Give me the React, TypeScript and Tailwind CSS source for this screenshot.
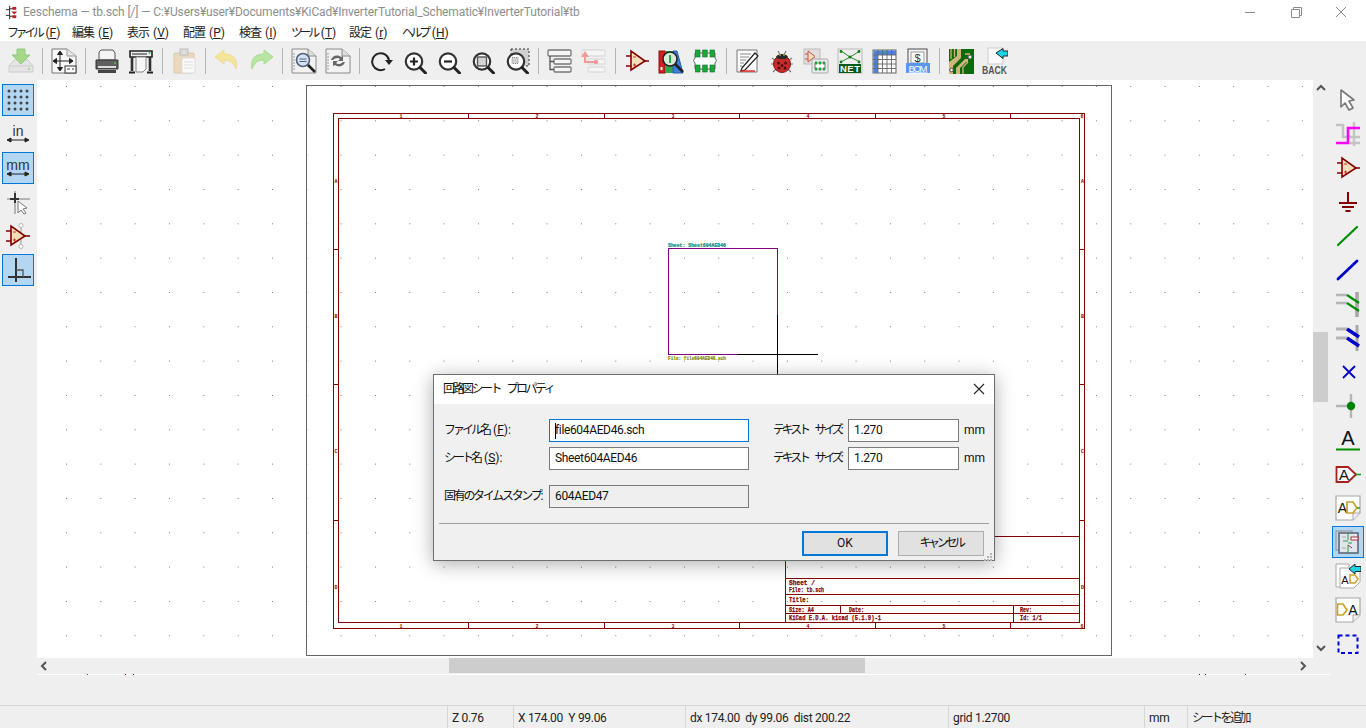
import type { ReactNode } from "react";

const FONT = "font-['Roboto','Noto_Sans_CJK_JP',sans-serif]";
const MAROON = "#840000";

function Ico({ children }: { children: ReactNode }) {
  return (
    <svg width="26" height="26" viewBox="0 0 26 26" fill="none" className="shrink-0">
      {children}
    </svg>
  );
}

function Lens({ children, color = "#333" }: { children?: ReactNode; color?: string }) {
  return (
    <g transform="translate(1 2.5)">
      <circle cx="11" cy="11" r="8.2" stroke={color} strokeWidth="2.2" fill="#fff" />
      {children}
      <path d="M17 17l5.5 5.5" stroke="#222" strokeWidth="3" strokeLinecap="round" />
    </g>
  );
}

function DocGlass({ children }: { children: ReactNode }) {
  return (
    <>
      <path d="M1 1H17L25 8V25H1Z" fill="#f2f2f2" stroke="#8a8a8a" />
      <path d="M17 1V8H25" fill="#ddd" stroke="#8a8a8a" />
      <path d="M3 5v18" stroke="#999" strokeDasharray="2 1" />
      {children}
    </>
  );
}

function Sym() {
  return (
    <>
      <path d="M7 3V22L21 13Z" fill="#f6dfb8" stroke={MAROON} strokeWidth="1.6" />
      <path d="M2 8H7M2 18H7M21 13H25" stroke={MAROON} strokeWidth="1.6" />
      <path d="M9 9h3M9 17h3M10.5 15.5v3" stroke="#c03030" />
    </>
  );
}

function HierDoc({ children }: { children: ReactNode }) {
  return (
    <>
      <path d="M1 1H25V18L18 25H1Z" fill="#fff" stroke="#a8a8a8" strokeWidth="1.2" />
      <path d="M25 18H18V25" fill="#eee" stroke="#a8a8a8" />
      {children}
    </>
  );
}

const top: ReactNode[] = [
  <Ico><path d="M1 18L6 12H20L25 18V24H1Z" fill="#e4e4e4" stroke="#cdcdcd" /><path d="M1 18H25" stroke="#cdcdcd" /><circle cx="21" cy="21" r="1" fill="#8fd48f" /><path d="M9 1H17V7H22L13 16 4 7H9Z" fill="#a7d88a" stroke="#93c978" /></Ico>,
  "sep",
  <Ico><path d="M1 1H16L25 8V25H1Z" fill="#f7f7f7" stroke="#777" /><path d="M16 1V8H25" fill="#e5e5e5" stroke="#999" /><path d="M9 4V22M3 13H21M9 3l-2.5 3.5h5zM9 23l-2.5-3.5h5zM2 13l3.5-2.5v5zM22 13l-3.5-2.5v5z" stroke="#222" fill="#222" strokeWidth="1" /><rect x="14" y="18" width="11" height="7" fill="#fff" stroke="#333" /><path d="M16 21h3M21 21h2" stroke="#333" /></Ico>,
  "sep",
  <Ico><path d="M7 2H19L21 5V12H5V4Z" fill="#f4f4f4" stroke="#555" /><path d="M2 12H24V21H2Z" fill="#5f5f5f" stroke="#333" /><path d="M4 19h18" stroke="#ddd" strokeWidth="2" /><path d="M4 22H22V25H4Z" fill="#444" /><circle cx="21" cy="15" r="1" fill="#36c936" /></Ico>,
  <Ico><path d="M2 3H24V9H2Z" fill="#eee" stroke="#222" strokeWidth="1.6" /><path d="M4 6H19" stroke="#222" /><circle cx="21.5" cy="5" r="1" fill="#36c936" /><path d="M8 9H18V21L15 24H8Z" fill="#f7f7f7" stroke="#888" /><path d="M4 9V23M22 9V23" stroke="#333" strokeWidth="2.6" /><path d="M1 24.5H7M19 24.5H25" stroke="#222" strokeWidth="2" /></Ico>,
  "sep",
  <Ico><rect x="3" y="5" width="20" height="20" rx="1" fill="#ead9bd" stroke="#d8c7aa" /><rect x="9" y="1" width="8" height="6" fill="#ddd" stroke="#bbb" /><path d="M11 10H24V25H11Z" fill="#fafafa" stroke="#ddd" /><path d="M13 14h9M13 17h9M13 20h9" stroke="#ddd" /></Ico>,
  "sep",
  <Ico><path d="M1 9L10 2V6C19 6 24 11 22 21 20 15 16 12 10 12V16Z" fill="#f4e59a" stroke="#ecdc8a" /></Ico>,
  <Ico><path d="M25 9L16 2V6C7 6 2 11 4 21 6 15 10 12 16 12V16Z" fill="#b8e6a0" stroke="#aadc92" /></Ico>,
  "sep",
  <Ico><DocGlass><circle cx="12" cy="12" r="6.5" fill="#d5e2f3" stroke="#50627a" strokeWidth="1.6" /><path d="M8.5 11h7M8.5 13.5h7" stroke="#50627a" /><path d="M17 17l7 7" stroke="#222" strokeWidth="2.6" /></DocGlass></Ico>,
  <Ico><DocGlass><path d="M6 12C7 8 12 6 16 9l2-1v5h-5l2-2c-2-2-5-1-7 1zM20 14c-1 4-6 6-10 3l-2 1v-5h5l-2 2c2 2 5 1 7-1z" fill="#666" /></DocGlass></Ico>,
  "sep",
  <Ico><path d="M17 21A8.5 8.5 0 1 1 21 12" stroke="#222" strokeWidth="2" /><path d="M17 12H25L21 17Z" fill="#222" /></Ico>,
  <Ico><Lens><path d="M7 11H15M11 7V15" stroke="#222" strokeWidth="2.2" /></Lens></Ico>,
  <Ico><Lens><path d="M7 11H15" stroke="#222" strokeWidth="2.2" /></Lens></Ico>,
  <Ico><Lens><rect x="6.5" y="6.5" width="9" height="9" fill="#d4d4d4" stroke="#555" strokeWidth="1.4" /></Lens></Ico>,
  <Ico><rect x="7" y="1" width="18" height="17" fill="#d0d0d0" stroke="#333" strokeDasharray="2 2" /><Lens /><rect x="8" y="9.5" width="6" height="6" fill="#d0d0d0" stroke="#888" strokeDasharray="1 1" /></Ico>,
  "sep",
  <Ico><rect x="1" y="2" width="23" height="6" rx="1" fill="#f5f5f5" stroke="#777" strokeWidth="1.3" /><rect x="7" y="11" width="17" height="5" rx="1" fill="#f5f5f5" stroke="#777" strokeWidth="1.3" /><rect x="7" y="19" width="17" height="5" rx="1" fill="#f5f5f5" stroke="#777" strokeWidth="1.3" /><path d="M3 8V21.5H7M3 13.5H7" stroke="#555" strokeWidth="1.3" /></Ico>,
  <Ico><rect x="1" y="2" width="23" height="6" rx="1" fill="#f5f5f5" stroke="#ddd" strokeWidth="1.3" /><rect x="7" y="11" width="17" height="5" rx="1" fill="#f5f5f5" stroke="#ddd" strokeWidth="1.3" /><rect x="7" y="19" width="17" height="5" rx="1" fill="#f5f5f5" stroke="#ddd" strokeWidth="1.3" /><path d="M4 8V14H14" stroke="#ee9a9a" strokeWidth="2" /><path d="M0 9L4 3 8 9Z" fill="#ee9a9a" /><circle cx="15" cy="14" r="2.2" fill="#ee9a9a" /></Ico>,
  "sep",
  <Ico><Sym /></Ico>,
  <Ico><rect x="1" y="3" width="6" height="22" fill="#d02020" stroke="#901010" /><rect x="7" y="3" width="8" height="22" fill="#2aa84a" /><path d="M15 3H19L25 25H15Z" fill="#3d7fe0" stroke="#2c5fa8" /><circle cx="12" cy="11" r="7" fill="#d9ead9" stroke="#222" strokeWidth="1.6" /><path d="M12 7V15" stroke="#2aa84a" strokeWidth="2" /><path d="M17 16l8 8" stroke="#222" strokeWidth="2.6" /><rect x="2.5" y="19" width="2" height="3" fill="#fff" /></Ico>,
  <Ico><path d="M3 5H23V10L24.5 12.5 23 15V21H3V15L1.5 12.5 3 10Z" fill="#fff" stroke="#666" /><g fill="#19a83a" stroke="#0b6c20" strokeWidth=".6"><rect x="3.5" y="2" width="4.5" height="7" /><rect x="10.7" y="2" width="4.5" height="7" /><rect x="18" y="2" width="4.5" height="7" /><rect x="3.5" y="17" width="4.5" height="7" /><rect x="10.7" y="17" width="4.5" height="7" /><rect x="18" y="17" width="4.5" height="7" /></g></Ico>,
  "sep",
  <Ico><path d="M2 2H22V24H2Z" fill="#fbfbfb" stroke="#777" /><path d="M5 6H16M5 9H14M5 12H11M5 15H9M5 18H7" stroke="#888" /><path d="M7 20L20 5 23 8 10 22 6 23Z" fill="#fff" stroke="#222" strokeWidth="1.2" /><path d="M5 23H20" stroke="#e02020" strokeWidth="1.4" /></Ico>,
  <Ico><path d="M9 3l2 4M17 3l-2 4M3 10l3 2M23 10l-3 2M2 16h4M24 16h-4M4 24l3-3M22 24l-3-3" stroke="#777" strokeWidth="1.1" /><ellipse cx="13" cy="16" rx="8.5" ry="8.5" fill="#c82a2a" stroke="#7a1a1a" /><path d="M7 8.5A7 5 0 0 1 19 8.5L17 11H9Z" fill="#2a2a2a" /><path d="M10 7h2M14 7h2" stroke="#d8c040" strokeWidth="1.2" /><circle cx="9.5" cy="15" r="1.5" fill="#541010" /><circle cx="16.5" cy="15" r="1.5" fill="#541010" /><circle cx="10" cy="20" r="1.5" fill="#541010" /><circle cx="16" cy="20" r="1.5" fill="#541010" /><circle cx="13" cy="17.5" r="1.5" fill="#541010" /></Ico>,
  <Ico><rect x="1" y="1" width="16" height="15" fill="#e2dedd" stroke="#bbb" /><path d="M5 3V14L12 8.5Z" fill="#f6dfb8" stroke="#c05050" /><path d="M2 6h3M2 11h3" stroke="#c05050" /><rect x="9" y="11" width="16" height="14" rx="1" fill="#e9e9e9" stroke="#aaa" /><rect x="12" y="15" width="10" height="6" fill="#fff" stroke="#777" /><g fill="#19a83a"><rect x="12" y="13.5" width="2" height="3" /><rect x="16" y="13.5" width="2" height="3" /><rect x="20" y="13.5" width="2" height="3" /><rect x="12" y="19.5" width="2" height="3" /><rect x="16" y="19.5" width="2" height="3" /><rect x="20" y="19.5" width="2" height="3" /></g></Ico>,
  <Ico><rect x="1" y="1" width="24" height="24" fill="#eee" stroke="#bbb" /><path d="M4 3L13 9 23 3M4 14L13 9 23 14" stroke="#2a8a2a" /><g fill="#127a12"><circle cx="4" cy="3.5" r="1.4" /><circle cx="22" cy="3.5" r="1.4" /><circle cx="13" cy="9" r="1.6" /><circle cx="4" cy="14" r="1.4" /><circle cx="22" cy="14" r="1.4" /></g><rect x="2" y="16" width="22" height="9" fill="#0a5a1a" /><text x="13" y="24" textAnchor="middle" fontSize="9.5" fontWeight="700" fill="#fff" fontFamily="Liberation Sans" textLength="20">NET</text></Ico>,
  <Ico><rect x="2" y="2" width="23" height="23" fill="#fff" stroke="#666" /><path d="M2.5 2.5H25V7H7V25H2.5Z" fill="#4a82dc" /><path d="M7 2V25M11.5 2V25M16 2V25M20.5 2V25M2 7H25M2 11.5H25M2 16H25M2 20.5H25" stroke="#666" strokeWidth=".9" /></Ico>,
  <Ico><rect x="3" y="1" width="19" height="15" fill="#f5f5f5" stroke="#666" strokeWidth="1.2" /><rect x="6" y="4" width="13" height="11" fill="#fff" stroke="#999" /><text x="12.5" y="14" textAnchor="middle" fontSize="11" fill="#333" fontFamily="Liberation Sans">$</text><rect x="1" y="15" width="24" height="10" fill="#5a96ee" /><text x="13" y="23.5" textAnchor="middle" fontSize="9.5" fill="#fff" fontFamily="Liberation Sans" textDecoration="underline" textLength="19">BOM</text></Ico>,
  "sep",
  <Ico><rect x="1" y="1" width="25" height="25" fill="#0c6a0c" /><path d="M1 14L9 8V1H13V10L5 18V26H1ZM8 26V20L17 11H20V14H18L12 20V26Z" fill="#d3b27b" /><path d="M3 1V11M6.5 1V9M10 1V7M17 6H22M15 26V19L20 14" stroke="#d3b27b" strokeWidth="1.3" /><circle cx="22" cy="9" r="2" fill="#f2f2f2" stroke="#555" /><circle cx="3.5" cy="22" r="1.8" fill="#f2f2f2" stroke="#555" /></Ico>,
  <svg width="26" height="32" viewBox="0 -3 26 32" fill="none" className="shrink-0">
    <path d="M6 0H21V16H6Z" fill="#fafafa" stroke="#ccc" />
    <path d="M14 5L21 .5V3H26V8H21V10.5Z" fill="#19d6e6" stroke="#222" />
    <g transform="scale(.82 1)">
      <text x="0" y="26" fontSize="10.5" fontWeight="700" fill="#555" fontFamily="Liberation Sans">BACK</text>
    </g>
  </svg>,
];

const unitArrow = <path d="M3 19H23M2 19l4-2v4zM24 19l-4-2v4z" stroke="#222" fill="#222" strokeWidth="1" />;

const left: [ReactNode, boolean][] = [
  [<Ico><g fill="#444">{[4, 10, 16, 22].flatMap((y) => [4, 10, 16, 22].map((x) => <circle key={`${x}-${y}`} cx={x} cy={y} r="1.5" />))}</g></Ico>, true],
  [<Ico><text x="13" y="15" textAnchor="middle" fontSize="14" fill="#333" fontFamily="Liberation Sans">in</text>{unitArrow}</Ico>, false],
  [<Ico><text x="13" y="15" textAnchor="middle" fontSize="14" fill="#333" fontFamily="Liberation Sans">mm</text>{unitArrow}</Ico>, true],
  [<Ico><path d="M10 2V25M2 10H25" stroke="#b5b5b5" strokeWidth="2" /><path d="M5 10H14M10 4V14" stroke="#333" strokeWidth="2" /><path d="M13 12V24L16 21 19 25 21 24 18 20 22 19Z" fill="#fff" stroke="#777" /></Ico>, false],
  [<Ico><path d="M16 3V23" stroke="#b5b5b5" strokeWidth="1.5" /><circle cx="16" cy="2.5" r="2" stroke="#b5b5b5" fill="#fff" /><circle cx="16" cy="23.5" r="2" stroke="#b5b5b5" fill="#fff" /><path d="M6 3V22L20 13Z" fill="#f6dfb8" stroke={MAROON} strokeWidth="1.6" /><path d="M1 8H6M1 18H6M20 13H25" stroke={MAROON} strokeWidth="1.6" /><path d="M8 9h3M8 17h3M9.5 15.5v3" stroke="#c03030" /></Ico>, false],
  [<Ico><path d="M11 1V25M3 20H26" stroke="#333" strokeWidth="2" /><path d="M11 13H18V20" stroke="#555" strokeWidth="1.3" /></Ico>, true],
];

const right: [ReactNode, boolean][] = [
  [<Ico><path d="M6 3V20L10 16 14 23 18 21 14 14 19 13Z" fill="#fff" stroke="#777" strokeWidth="1.6" strokeLinejoin="round" /></Ico>, false],
  [<Ico><path d="M1 4H8V16H25M19 1V25M15 22H25" stroke="#c4c4c4" strokeWidth="2.4" /><path d="M1 22H13V7H25" stroke="#ff00ff" strokeWidth="2.6" /></Ico>, false],
  [<Ico><Sym /></Ico>, false],
  [<Ico><path d="M13 3V14" stroke={MAROON} strokeWidth="2" /><path d="M4 14H22M7 18H19M10.5 22H15.5" stroke={MAROON} strokeWidth="2" /></Ico>, false],
  [<Ico><path d="M3 22L22 4" stroke="#008f00" strokeWidth="2.2" strokeLinecap="round" /></Ico>, false],
  [<Ico><path d="M3 22L22 4" stroke="#0000c8" strokeWidth="2.8" strokeLinecap="round" /></Ico>, false],
  [<Ico><path d="M1 4H12M1 12H12" stroke="#b5b5b5" strokeWidth="2.4" /><path d="M22 1V26" stroke="#a8a8a8" strokeWidth="3.6" /><path d="M12 4L24 12M12 12L24 20" stroke="#008f00" strokeWidth="2.2" /></Ico>, false],
  [<Ico><path d="M1 4H12M1 13H12" stroke="#b5b5b5" strokeWidth="3" /><path d="M22 0V26" stroke="#a8a8a8" strokeWidth="3" /><path d="M12 4L24 12M12 13L24 21" stroke="#0000c8" strokeWidth="3.4" /></Ico>, false],
  [<Ico><path d="M8 7L20 19M20 7L8 19" stroke="#0000c8" strokeWidth="1.8" /></Ico>, false],
  [<Ico><path d="M1 13H16M16 1V25" stroke="#b5b5b5" strokeWidth="2.4" /><circle cx="16" cy="13" r="4.2" fill="#008400" /></Ico>, false],
  [<Ico><text x="13" y="18.4" textAnchor="middle" fontSize="20" fill="#111" fontFamily="Liberation Sans">A</text><path d="M1 22.5H25" stroke="#008f00" strokeWidth="2" /></Ico>, false],
  [<Ico><path d="M1.5 6H13L21 13.5 13 21H1.5Z" fill="#fff" stroke="#a62020" strokeWidth="1.8" /><path d="M21 13.5H26" stroke="#12a012" strokeWidth="1.6" /><text x="9" y="19" textAnchor="middle" fontSize="15" fill="#111" fontFamily="Liberation Sans">A</text></Ico>, false],
  [<Ico><HierDoc><text x="7.5" y="18" textAnchor="middle" fontSize="14" fill="#111" fontFamily="Liberation Sans">A</text><path d="M12 7H18L22 13 18 18H12Z" fill="#fff" stroke="#c9a227" strokeWidth="1.7" /><path d="M22 13H25" stroke="#12a012" strokeWidth="1.4" /></HierDoc></Ico>, false],
  [<Ico><rect x="1" y="2" width="16" height="19" fill="#cfd6df" stroke="#8a9099" /><rect x="4" y="4" width="19" height="20" fill="#dfe6ee" stroke="#5d6a78" strokeWidth="1.6" /><path d="M13 4V11M13 16V24M8 12H13M13 14H17" stroke="#2f9a3a" /><rect x="16" y="8" width="7" height="3" fill="#fff" stroke="#b03030" /><path d="M13 16L17 19" stroke="#b03030" /><path d="M7 8h4M7 19h4" stroke="#aaa" /></Ico>, true],
  [<Ico><path d="M1 1H14V24H1Z" fill="#fff" stroke="#aaa" /><path d="M5 5H25V19L19 25H5Z" fill="#fff" stroke="#aaa" /><text x="10" y="21" textAnchor="middle" fontSize="11" fill="#111" fontFamily="Liberation Sans">A</text><path d="M15 12H20L23 16 20 20H15Z" fill="#fff" stroke="#c9a227" strokeWidth="1.5" /><path d="M14 6L20 1V3.5H26V8.5H20V11Z" fill="#19d6e6" stroke="#222" /></Ico>, false],
  [<Ico><HierDoc><path d="M2.5 7H8L12 13 8 18H2.5Z" fill="#fff" stroke="#c9a227" strokeWidth="1.7" /><text x="18" y="18" textAnchor="middle" fontSize="14" fill="#111" fontFamily="Liberation Sans">A</text></HierDoc></Ico>, false],
  [<Ico><rect x="3.5" y="4.5" width="19" height="17.5" stroke="#0000e0" strokeWidth="2" strokeDasharray="4 3" /></Ico>, false],
];

function ToolBtn({ on, children }: { on: boolean; children: ReactNode }) {
  return (
    <div className={`flex h-[32px] w-[32px] items-center justify-center ${on ? "border border-[#0078d7] bg-[#b3d7f3]" : ""}`}>
      {children}
    </div>
  );
}

function Menu({ label, k, w, kana }: { label: string; k: string; w: string; kana?: boolean }) {
  return (
    <span className={`whitespace-nowrap ${w}`}>
      <span className={kana ? "tracking-[-3.4px]" : "tracking-[-1px]"}>{label}</span>
      <span className="ml-[4px]">(<span className="underline">{k}</span>)</span>
    </span>
  );
}

function Field({ value, focus, dim }: { value: string; focus?: boolean; dim?: boolean }) {
  return (
    <div className={`relative flex h-[23px] items-center border pb-[2px] pl-[5px] text-[12px] tracking-[-0.35px] text-[#111] ${focus ? "border-[#0078d7]" : "border-[#7a7a7a]"} ${dim ? "bg-[#efefef]" : "bg-white"}`}>
      {value}
      {focus && <span className="absolute left-[5px] top-[3px] h-[16px] w-px bg-black" />}
    </div>
  );
}

function Schematic() {
  const nums = [[401, "1"], [537, "2"], [673, "3"], [808, "4"], [944, "5"], [1082, "6"]] as const;
  const lets = [[181, "A"], [316, "B"], [451, "C"], [587, "D"]] as const;
  const tx = (x: number, y: number, w: number, s: string) => (
    <text x={x} y={y} textLength={w} lengthAdjust="spacingAndGlyphs">{s}</text>
  );
  return (
    <svg width="1276" height="578" viewBox="37 80 1276 578" className="block" fill="none" shapeRendering="crispEdges">
      <defs>
        <pattern id="dots" x="66" y="86" width="34.33" height="34.33" patternUnits="userSpaceOnUse">
          <rect width="1.4" height="1.4" fill="#777" />
        </pattern>
      </defs>
      <rect x="37" y="80" width="1276" height="578" fill="#fff" />
      <rect x="37" y="80" width="1276" height="578" fill="url(#dots)" />
      <rect x="306.5" y="85.5" width="805" height="570" stroke="#666" />
      <g stroke={MAROON}>
        <rect x="333.5" y="113.5" width="751" height="515" />
        <rect x="338.5" y="118.5" width="741" height="504" />
        {[468, 604, 739, 875, 1010].map((x) => (
          <path key={x} d={`M${x + 0.5} 113V118M${x + 0.5} 623V628`} />
        ))}
        {[249, 384, 520].map((y) => (
          <path key={y} d={`M333 ${y + 0.5}H338M1080 ${y + 0.5}H1085`} />
        ))}
        <path d="M785.5 536.5H1080M785.5 536V623M785 578.5H1080M785 594.5H1080M785 605.5H1080M785 613.5H1080M840.5 605V613M1013.5 605V623" />
      </g>
      <g fill={MAROON} fontFamily="Liberation Mono" fontWeight="700" fontSize="5" textAnchor="middle">
        {nums.map(([x, s]) => (
          <g key={s}>
            <text x={x} y="118">{s}</text>
            <text x={x} y="628">{s}</text>
          </g>
        ))}
        {lets.map(([y, s]) => (
          <g key={s}>
            <text x="336" y={y + 2}>{s}</text>
            <text x="1082.5" y={y + 2}>{s}</text>
          </g>
        ))}
      </g>
      <g fill={MAROON} stroke={MAROON} strokeWidth=".25" fontFamily="Liberation Mono" fontWeight="700" fontSize="7.5">
        {tx(789, 585, 26, "Sheet /")}
        {tx(789, 592, 35, "File: tb.sch")}
        {tx(789, 602, 20, "Title:")}
        {tx(789, 612, 25, "Size: A4")}
        {tx(849, 612, 15, "Date:")}
        {tx(1020, 612, 12, "Rev:")}
        {tx(789, 620, 92, "KiCad E.D.A.  kicad (5.1.9)-1")}
        {tx(1020, 620, 22, "Id: 1/1")}
      </g>
      <rect x="668" y="248.5" width="109" height="106" stroke="#840084" />
      <path d="M738 354.5H818M777.5 315V380" stroke="#000" />
      <g fontFamily="Liberation Mono" fontWeight="700" fontSize="6">
        <text x="668" y="247" fill="#008484" stroke="#008484" strokeWidth=".2" textLength="58" lengthAdjust="spacingAndGlyphs">Sheet: Sheet604AED46</text>
        <text x="668" y="360" fill="#848400" stroke="#848400" strokeWidth=".2" textLength="58" lengthAdjust="spacingAndGlyphs">File: file604AED46.sch</text>
      </g>
    </svg>
  );
}

function Dialog() {
  return (
    <div className="absolute left-[433px] top-[374px] flex h-[187px] w-[562px] flex-col border border-[#6e6e6e] bg-[#f0f0f0] text-[12px] text-[#111] shadow-[0_3px_18px_rgba(0,0,0,0.32)]">
      <div className="flex h-[29px] shrink-0 items-center justify-between bg-white pb-[2px] pl-[9px] pr-[9px]">
        <span className="whitespace-nowrap tracking-[-2.5px] [word-spacing:6px]">回路図シート プロパティ</span>
        <svg width="12" height="12" viewBox="0 0 12 12">
          <path d="M1 1L11 11M11 1L1 11" stroke="#222" strokeWidth="1.1" />
        </svg>
      </div>
      <div className="grid grid-cols-[105px_200px_24px_75px_111px_auto] items-center gap-y-[5px] whitespace-nowrap pl-[10px] pt-[15px] [&>span]:pb-[2px]">
        <span><span className="tracking-[-3px]">ファイル名</span><span className="ml-[4px]">(<span className="underline">F</span>):</span></span>
        <Field value="file604AED46.sch" focus />
        <span />
        <span className="tracking-[-3.2px] [word-spacing:7px]">テキスト サイズ:</span>
        <Field value="1.270" />
        <span className="pl-[5px]">mm</span>
        <span><span className="tracking-[-3px]">シート名</span><span className="ml-[4px]">(<span className="underline">S</span>):</span></span>
        <Field value="Sheet604AED46" />
        <span />
        <span className="tracking-[-3.2px] [word-spacing:7px]">テキスト サイズ:</span>
        <Field value="1.270" />
        <span className="pl-[5px]">mm</span>
        <span className="mt-[10px] tracking-[-2.3px]">固有のタイムスタンプ:</span>
        <div className="mt-[10px]">
          <Field value="604AED47" dim />
        </div>
      </div>
      <div className="mx-[5px] mt-[15px] h-px shrink-0 bg-[#a0a0a0]" />
      <div className="relative flex justify-end gap-[10px] pr-[10px] pt-[7px]">
        <div className="flex h-[25px] w-[86px] items-center justify-center border-2 border-[#0078d7] bg-[#e1e1e1] pb-[1px]">OK</div>
        <div className="flex h-[25px] w-[86px] items-center justify-center border border-[#adadad] bg-[#e1e1e1] pb-[1px] tracking-[-3.4px]">キャンセル</div>
        <svg width="9" height="9" viewBox="0 0 9 9" className="absolute bottom-[-6px] right-[1px]" fill="#b5b5b5">
          <rect x="6" y="0" width="2" height="2" />
          <rect x="3" y="3" width="2" height="2" />
          <rect x="6" y="3" width="2" height="2" />
          <rect x="0" y="6" width="2" height="2" />
          <rect x="3" y="6" width="2" height="2" />
          <rect x="6" y="6" width="2" height="2" />
        </svg>
      </div>
    </div>
  );
}

function Chevron({ dir }: { dir: "up" | "down" | "left" | "right" }) {
  const d = { up: "M1 6L5 2 9 6", down: "M1 2L5 6 9 2", left: "M6 1L2 5 6 9", right: "M2 1L6 5 2 9" }[dir];
  return (
    <svg width="10" height="10" viewBox="0 0 10 10" fill="none">
      <path d={d} stroke="#555" strokeWidth="2" />
    </svg>
  );
}

export default function App() {
  return (
    <main className={`relative flex h-[728px] w-[1366px] flex-col overflow-hidden bg-[#efefef] text-[#111] ${FONT}`}>
      {/* TITLE */}
      <div className="flex h-[23px] items-center justify-between bg-white pl-[4px] pt-[1px]">
        <div className="flex items-center gap-[4px] text-[12px] tracking-[-0.13px] text-[#8e8e8e]">
          <svg width="15" height="15" viewBox="0 0 16 16">
            <path d="M6 1V15M2 5H6M2 11H6M6 4H13M6 12H13" stroke="#222" />
            <path d="M8 7H14L11 10Z" fill="#c02020" />
            <rect x="9" y="2" width="4" height="3" fill="#c02020" />
            <rect x="9" y="11" width="4" height="3" fill="#c02020" />
          </svg>
          <span>Eeschema — tb.sch [/] — C:¥Users¥user¥Documents¥KiCad¥InverterTutorial_Schematic¥InverterTutorial¥tb</span>
        </div>
        <div className="flex items-center pr-[9px]">
          <svg width="112" height="12" viewBox="0 0 112 12" fill="none" stroke="#8a8a8a">
            <path d="M0 6.5H10" />
            <path d="M46.5 3.5V11.5H54.5V3.5ZM48.5 3V1.5H56.5V9.5H55" />
            <path d="M91 1L101 11M101 1L91 11" />
          </svg>
        </div>
      </div>

      {/* MENU */}
      <div className="flex h-[18px] items-center bg-white pl-[7px] pt-[1px] text-[12px] text-[#222]">
        <Menu label="ファイル" k="F" w="w-[65px]" kana />
        <Menu label="編集" k="E" w="w-[55px]" />
        <Menu label="表示" k="V" w="w-[56px]" />
        <Menu label="配置" k="P" w="w-[56px]" />
        <Menu label="検査" k="I" w="w-[52px]" />
        <Menu label="ツール" k="T" w="w-[58px]" kana />
        <Menu label="設定" k="r" w="w-[53px]" />
        <Menu label="ヘルプ" k="H" w="w-[60px]" kana />
      </div>

      {/* TOOLBAR */}
      <div className="flex h-[39px] items-center bg-[#efefef] pl-[4px]">
        {top.map((t, i) =>
          t === "sep" ? (
            <div key={i} className="flex h-[26px] w-[9px] justify-center">
              <div className="h-full w-px bg-[#b4b4b4]" />
            </div>
          ) : (
            <div key={i} className="flex h-[34px] w-[34px] items-center justify-center">
              {t}
            </div>
          ),
        )}
      </div>

      {/* MIDDLE */}
      <div className="flex h-[595px]">
        <div className="flex w-[37px] flex-col items-start gap-[2px] pl-[2px] pt-[4px]">
          {left.map(([ic, on], i) => (
            <ToolBtn key={i} on={on}>{ic}</ToolBtn>
          ))}
        </div>
        <div className="flex w-[1293px] flex-col">
          <div className="flex h-[578px]">
            <Schematic />
            <div className="flex w-[17px] flex-col">
              <div className="flex h-[18px] items-center justify-start pl-[3px]"><Chevron dir="up" /></div>
              <div className="flex-1 pr-[2px] pt-[234px]">
                <div className="h-[70px] bg-[#cdcdcd]" />
              </div>
              <div className="flex h-[18px] items-center justify-start pl-[3px]"><Chevron dir="down" /></div>
            </div>
          </div>
          <div className="flex h-[16px] items-center justify-between pl-[3px] pr-[21px]">
            <Chevron dir="left" />
            <Chevron dir="right" />
          </div>
          <div className="relative h-[1px] bg-white">
            <span className="absolute left-[50px] top-0 h-px w-px bg-[#555]" />
            <span className="absolute left-[88px] top-0 h-px w-px bg-[#840000]" />
            <span className="absolute left-[96px] top-0 h-px w-px bg-[#840000]" />
            <span className="absolute left-[1162px] top-0 h-px w-px bg-[#840000]" />
            <span className="absolute left-[1168px] top-0 h-px w-px bg-[#840000]" />
            <span className="absolute left-[1208px] top-0 h-px w-px bg-[#555]" />
          </div>
        </div>
        <div className="flex w-[36px] flex-col items-center gap-[2px] pt-[4px]">
          {right.map(([ic, on], i) => (
            <ToolBtn key={i} on={on}>{ic}</ToolBtn>
          ))}
        </div>
      </div>

      {/* MESSAGE PANEL */}
      <div className="h-[31px] border-b border-[#d6d6d6] bg-[#efefef]" />

      {/* STATUS */}
      <div className="flex h-[22px] items-center text-[12px] tracking-[-0.3px] text-[#222]">
        <div className="w-[447px]" />
        <div className="h-full w-[66px] border-l border-[#d6d6d6] pl-[4px] leading-[24px]">Z 0.76</div>
        <div className="h-full w-[172px] border-l border-[#d6d6d6] pl-[4px] leading-[24px] whitespace-pre">X 174.00  Y 99.06</div>
        <div className="h-full w-[263px] border-l border-[#d6d6d6] pl-[4px] leading-[24px] whitespace-pre">dx 174.00  dy 99.06  dist 200.22</div>
        <div className="h-full w-[196px] border-l border-[#d6d6d6] pl-[4px] leading-[24px]">grid 1.2700</div>
        <div className="h-full w-[43px] border-l border-[#d6d6d6] pl-[4px] leading-[24px]">mm</div>
        <div className="h-full flex-1 border-l border-[#d6d6d6] pl-[4px] leading-[24px] tracking-[-2.5px]">シートを追加</div>
      </div>

      {/* bar thumb over the horizontal scroll track */}
      <div className="absolute left-[449px] top-[658px] h-[15px] w-[416px] bg-[#cdcdcd]" />

      <Dialog />
    </main>
  );
}
